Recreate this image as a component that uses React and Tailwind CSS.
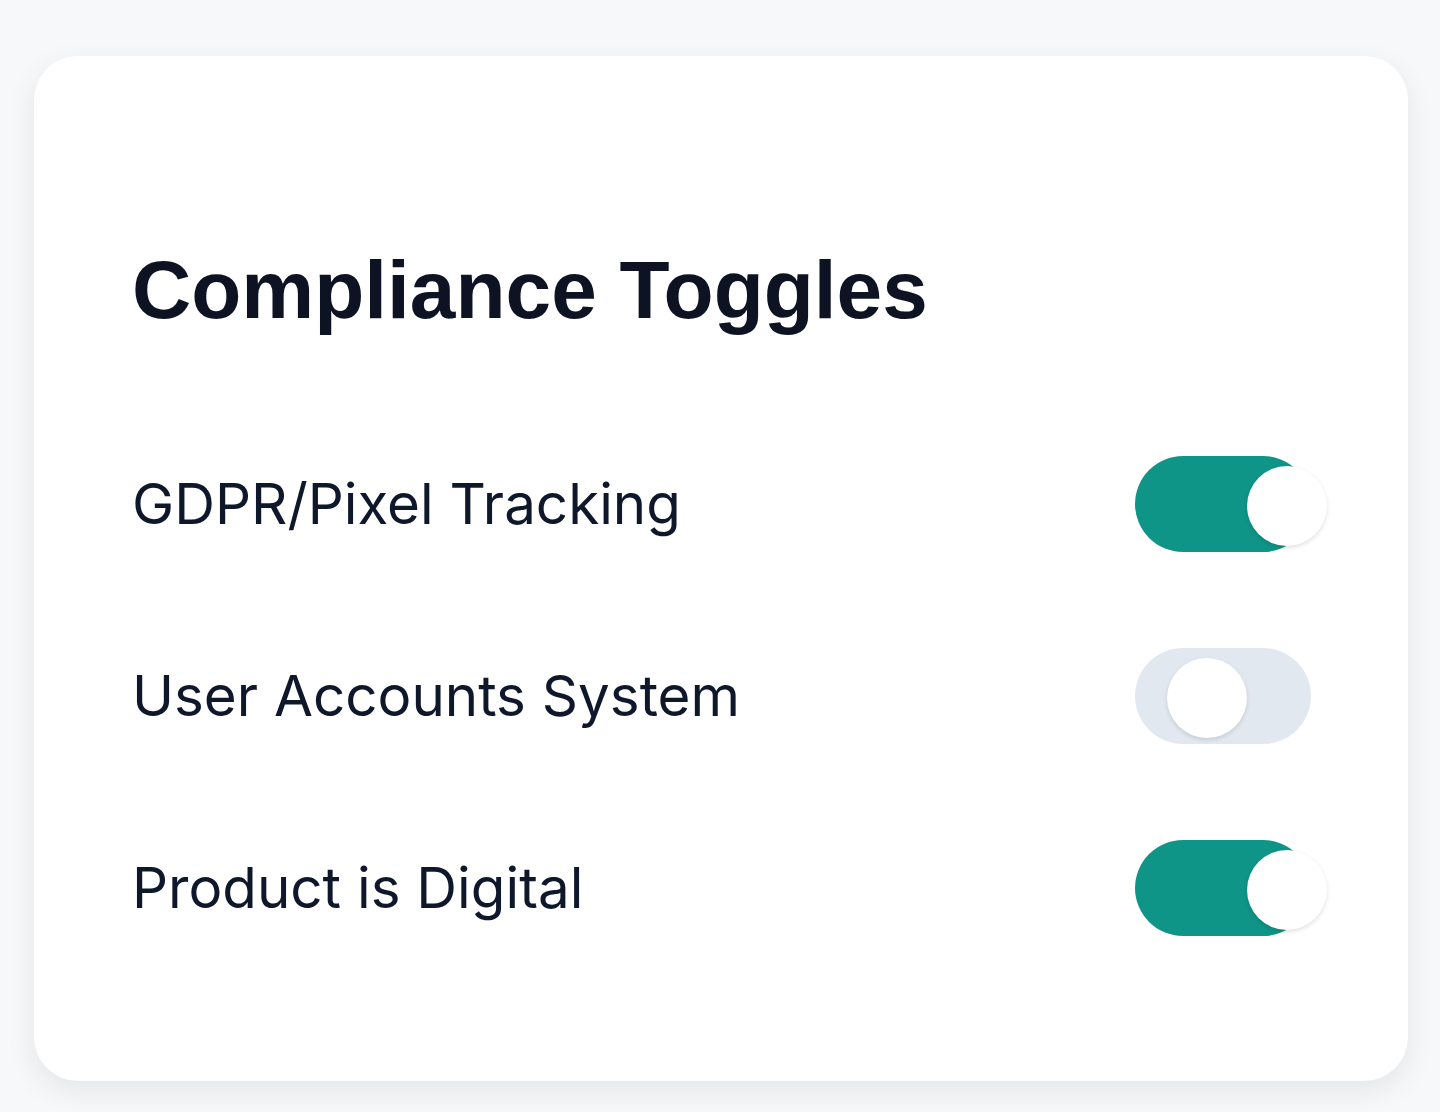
import React, { useState } from "react";

const rows = [
  { label: "GDPR/Pixel Tracking", on: true },
  { label: "User Accounts System", on: false },
  { label: "Product is Digital", on: true },
];

function Toggle({ on, onClick }) {
  return (
    <button
      type="button"
      onClick={onClick}
      className={`relative h-[96px] w-[176px] shrink-0 rounded-full transition ${
        on ? "bg-[#0f9488]" : "bg-[#e2e8f0]"
      }`}
    >
      <span
        className={`absolute top-[10px] h-[80px] w-[80px] rounded-full bg-white shadow-[0_2px_4px_rgba(0,0,0,0.12)] transition ${
          on ? "left-[112px]" : "left-[32px]"
        }`}
      />
    </button>
  );
}

export default function App() {
  const [state, setState] = useState(rows.map((r) => r.on));

  return (
    <div className="min-h-[1112px] bg-[#f7f8f9] pl-[34px] pr-[32px] pt-[56px]">
      <div className="rounded-[44px] bg-white pb-[145px] pl-[98px] pr-[97px] pt-[178px] shadow-[0_10px_30px_rgba(0,0,0,0.08)]">
        <h2 className="font-['Liberation_Sans',Arial,sans-serif] text-[82px] font-bold leading-[112px] text-[#0d1322]">
          Compliance Toggles
        </h2>
        <div className="mt-[110px] flex flex-col gap-[96px]">
          {rows.map((row, i) => (
            <div key={row.label} className="flex items-center justify-between">
              <span className="font-['Inter',sans-serif] text-[56.5px] text-[#0f172a]">{row.label}</span>
              <Toggle
                on={state[i]}
                onClick={() => setState((s) => s.map((v, j) => (j === i ? !v : v)))}
              />
            </div>
          ))}
        </div>
      </div>
    </div>
  );
}
